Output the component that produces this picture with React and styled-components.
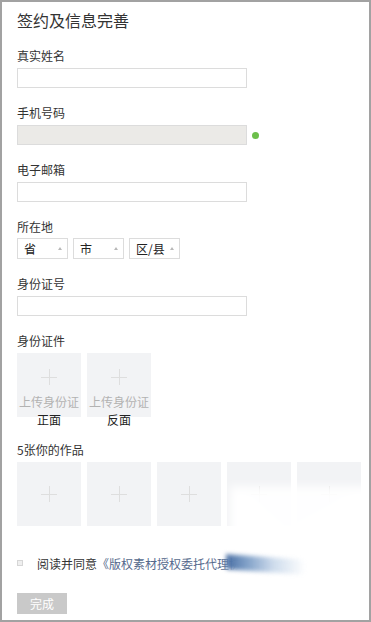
import React from 'react';
import styled, { createGlobalStyle } from 'styled-components';

const GlobalStyle = createGlobalStyle`
  html, body {
    margin: 0;
    padding: 0;
    background: #fff;
  }
  body {
    font-family: "Noto Sans CJK SC", "Noto Sans", sans-serif;
    color: #333;
  }
`;

const Page = styled.div`
  position: relative;
  box-sizing: border-box;
  width: 371px;
  height: 622px;
  border: 2px solid #a2a2a2;
  padding: 7px 15px 0;
  overflow: hidden;
`;

const Title = styled.h1`
  margin: 0;
  font-size: 16px;
  line-height: 22px;
  font-weight: 400;
  color: #333;
`;

const Field = styled.div`
  margin-top: ${(p) => p.$top || 17}px;
`;

const Label = styled.div`
  font-size: 12px;
  line-height: 16px;
  color: #333;
`;

const Row = styled.div`
  display: flex;
  align-items: center;
  gap: ${(p) => p.$gap || 5}px;
  margin-top: ${(p) => p.$top || 4}px;
`;

const Input = styled.div`
  box-sizing: border-box;
  width: 230px;
  height: 20px;
  border: 1px solid #dcdcdc;
  background: ${(p) => (p.$disabled ? '#ebeae7' : '#fff')};
  margin-top: ${(p) => p.$top ?? 4}px;
`;

const OkDot = styled.span`
  width: 7px;
  height: 7px;
  border-radius: 50%;
  background: #6cbf4b;
`;

const Select = styled.div`
  box-sizing: border-box;
  width: 51px;
  height: 21px;
  border: 1px solid #dcdcdc;
  display: flex;
  align-items: center;
  justify-content: space-between;
  padding: 0 5px 0 6px;
  font-size: 12px;
  color: #222;
`;

const Arrow = styled.span`
  width: 0;
  height: 0;
  border-left: 2.5px solid transparent;
  border-right: 2.5px solid transparent;
  border-bottom: 3px solid #b8b8b8;
`;

const Boxes = styled.div`
  display: flex;
  gap: 6px;
  margin-top: ${(p) => p.$top || 4}px;
`;

const UploadBox = styled.div`
  width: 64px;
  height: 64px;
  flex: none;
  background: #f2f3f5;
  display: flex;
  flex-direction: column;
  align-items: center;
  justify-content: ${(p) => (p.$withText ? 'flex-start' : 'center')};
  padding-top: ${(p) => (p.$withText ? 16 : 0)}px;
  box-sizing: border-box;
`;

const Plus = styled.span`
  position: relative;
  width: 16px;
  height: 16px;
  flex: none;
  &::before,
  &::after {
    content: '';
    position: absolute;
    background: #dedede;
  }
  &::before {
    left: 0;
    right: 0;
    top: 7.5px;
    height: 1px;
  }
  &::after {
    top: 0;
    bottom: 0;
    left: 7.5px;
    width: 1px;
  }
`;

const Hint = styled.div`
  margin-top: 8px;
  font-size: 12px;
  line-height: 18px;
  color: #b2b2b2;
  white-space: nowrap;
`;

const Caption = styled.div`
  font-size: 12px;
  line-height: 18px;
  color: #222;
  white-space: nowrap;
`;

const Agree = styled.div`
  display: flex;
  align-items: center;
  margin-top: 30px;
  font-size: 12px;
  line-height: 16px;
  white-space: nowrap;
`;

const Check = styled.span`
  box-sizing: border-box;
  width: 6px;
  height: 6px;
  border: 1px solid #d6d6d6;
  background: #efefef;
  margin: -3px 14px 0 0;
`;

const Link = styled.span`
  color: #55698c;
`;

const Button = styled.div`
  width: 50px;
  height: 21px;
  margin-top: 21px;
  background: #c9c9c9;
  color: #fff;
  font-size: 12px;
  line-height: 21px;
  text-align: center;
`;

/* whitish smudge lying over the lower right corner of the shot */
const Veil = styled.div`
  position: absolute;
  inset: 0;
  pointer-events: none;
  filter: blur(5px);
`;

const VeilShape = styled.div`
  position: absolute;
  inset: 0;
  background: #fff;
  opacity: ${(p) => p.$opacity || 1};
  clip-path: ${(p) => p.$clip};
`;

const Smear = styled.div`
  position: absolute;
  left: 224px;
  top: 555px;
  width: 80px;
  height: 15px;
  pointer-events: none;
  background: linear-gradient(
    to right,
    rgba(66, 105, 160, 0.95) 0%,
    rgba(95, 135, 185, 0.8) 25%,
    rgba(150, 180, 215, 0.45) 60%,
    rgba(210, 225, 240, 0) 100%
  );
  border-radius: 2px 40px 40px 2px;
  transform: skewY(4deg);
  filter: blur(2px);
`;

const idCards = ['正面', '反面'];

const App = () => {
  return (
    <Page>
      <GlobalStyle />
      <Title>签约及信息完善</Title>

      <Field>
        <Label>真实姓名</Label>
        <Input />
      </Field>

      <Field>
        <Label>手机号码</Label>
        <Row>
          <Input $disabled $top={0} />
          <OkDot />
        </Row>
      </Field>

      <Field>
        <Label>电子邮箱</Label>
        <Input />
      </Field>

      <Field>
        <Label>所在地</Label>
        <Row $top={3}>
          {['省', '市', '区/县'].map((s) => (
            <Select key={s}>
              {s}
              <Arrow />
            </Select>
          ))}
        </Row>
      </Field>

      <Field>
        <Label>身份证号</Label>
        <Input />
      </Field>

      <Field>
        <Label>身份证件</Label>
        <Boxes>
          {idCards.map((c) => (
            <UploadBox key={c} $withText>
              <Plus />
              <Hint>上传身份证</Hint>
              <Caption>{c}</Caption>
            </UploadBox>
          ))}
        </Boxes>
      </Field>

      <Field $top={25}>
        <Label>5张你的作品</Label>
        <Boxes>
          {[1, 2, 3, 4, 5].map((n) => (
            <UploadBox key={n}>
              <Plus />
            </UploadBox>
          ))}
        </Boxes>
      </Field>

      <Agree>
        <Check />
        阅读并同意<Link>《版权素材授权委托代理协议》</Link>
      </Agree>

      <Button>完成</Button>

      <Veil>
        <VeilShape $opacity={0.92} $clip="polygon(229px 484px, 371px 484px, 371px 630px, 229px 630px)" />
        <VeilShape $clip="polygon(228px 483px, 284px 533px, 336px 505px, 371px 480px, 371px 630px, 228px 630px)" />
      </Veil>
      <Smear />
    </Page>
  );
};

export default App;
